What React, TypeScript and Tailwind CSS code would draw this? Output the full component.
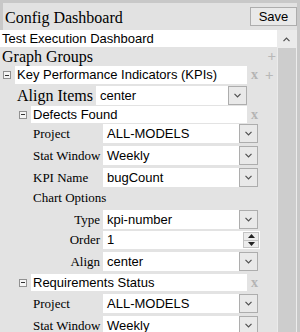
const serif = "[font-family:'Liberation_Serif','Times_New_Roman',serif]";
const sans = "[font-family:'Liberation_Sans',Arial,sans-serif]";

function Chevron({ up = false }: { up?: boolean }) {
  return (
    <svg width="7" height="5" viewBox="0 0 7 5" className={up ? 'rotate-180' : ''}>
      <path d="M0.5 0.8 L3.5 3.8 L6.5 0.8" stroke="#505050" fill="none" strokeWidth="1.2" />
    </svg>
  );
}

function Minus() {
  return (
    <span className="flex h-[8px] w-[8px] shrink-0 items-center justify-center border border-[#919191] bg-[#f4f4f4]">
      <span className="h-px w-[4px] bg-[#333]" />
    </span>
  );
}

function Select({ value, className = '' }: { value: string; className?: string }) {
  return (
    <div className={`flex h-[19px] bg-white ${className}`}>
      <span className={`flex-1 pl-[4px] text-[13px] leading-[19px] text-black ${sans}`}>{value}</span>
      <span className="flex w-[19px] items-center justify-center border border-[#adadad] bg-[#e9e9e9]">
        <Chevron />
      </span>
    </div>
  );
}

function Field({ label, value, right = false, top = 3 }: { label: string; value: string; right?: boolean; top?: number }) {
  return (
    <div className="flex h-[19px] items-center pl-[33px]" style={{ marginTop: top }}>
      <span className={`w-[70px] shrink-0 text-[13px] leading-[19px] ${serif} ${right ? 'pr-[3px] text-right' : ''}`}>
        {label}
      </span>
      <Select value={value} className="w-[155px]" />
    </div>
  );
}

function Group({ name, indent, h, plus = false }: { name: string; indent: number; h: number; plus?: boolean }) {
  return (
    <div className="flex items-center" style={{ height: h }}>
      <div className="flex items-center" style={{ paddingLeft: indent }}>
        <Minus />
      </div>
      <div
        className={`ml-[4px] bg-white pl-[2px] text-[13px] ${sans}`}
        style={{ width: 247 - indent - 12, height: h, lineHeight: `${h}px` }}
      >
        {name}
      </div>
      <span className={`w-[15px] text-center text-[14px] font-bold leading-[18px] text-[#b4b4b4] ${serif}`}>x</span>
      {plus && <span className="ml-[3px] text-[15px] leading-[18px] text-[#b8b8b8]">+</span>}
    </div>
  );
}

export default function App() {
  return (
    <div className="flex h-[332px] w-[300px] flex-col overflow-hidden border-r-[3px] border-[#c8c8c8] bg-[#e3e3e3] text-black">
      <div className="flex h-[30px] shrink-0 items-start justify-between border-t-[3px] border-l-[3px] border-[#c8c8c8] bg-[#e2e2e2]">
        <span className={`pl-[2px] pt-[5px] text-[16px] leading-[20px] ${serif}`}>Config Dashboard</span>
        <button
          className={`mt-[4px] h-[19px] w-[47px] border border-[#adadad] bg-[#e9e9e9] text-[13px] leading-[17px] ${sans}`}
        >
          Save
        </button>
      </div>

      <div className="flex min-h-0 flex-1">
        <div className="w-[277px] shrink-0">
          <div className={`h-[17px] bg-white pl-[2px] text-[13px] leading-[17px] ${sans}`}>Test Execution Dashboard</div>

          <div className="flex h-[19px] items-center justify-between pr-[1px]">
            <span className={`pl-[2px] text-[16px] leading-[19px] ${serif}`}>Graph Groups</span>
            <span className="text-[15px] leading-[19px] text-[#b8b8b8]">+</span>
          </div>

          <Group name="Key Performance Indicators (KPIs)" indent={3} h={18} plus />

          <div className="mt-[2px] flex h-[19px] items-center">
            <span className={`w-[96px] shrink-0 pl-[17px] text-[16px] leading-[19px] ${serif}`}>Align Items</span>
            <Select value="center" className="w-[151px]" />
          </div>

          <div className="mt-[1px]">
            <Group name="Defects Found" indent={19} h={17} />
          </div>

          <Field label="Project" value="ALL-MODELS" top={1} />
          <Field label="Stat Window" value="Weekly" />
          <Field label="KPI Name" value="bugCount" />

          <div className={`h-[20px] pl-[33px] pt-[1px] text-[13px] leading-[19px] ${serif}`}>Chart Options</div>

          <Field label="Type" value="kpi-number" right />

          <div className="mt-[2px] flex h-[18px] items-center pl-[33px]">
            <span className={`w-[70px] shrink-0 pr-[3px] text-right text-[13px] leading-[18px] ${serif}`}>Order</span>
            <div className="flex h-[18px] w-[157px] items-center bg-white pr-[1px]">
              <span className={`flex-1 pl-[4px] text-[13px] leading-[18px] ${sans}`}>1</span>
              <div className="flex h-[16px] w-[16px] flex-col border border-[#c4c4c4] bg-[#ececec]">
                <span className="flex flex-1 items-center justify-center border-b border-[#c4c4c4]">
                  <svg width="7" height="4" viewBox="0 0 7 4"><path d="M0 4 L3.5 0 L7 4Z" fill="#222" /></svg>
                </span>
                <span className="flex flex-1 items-center justify-center">
                  <svg width="7" height="4" viewBox="0 0 7 4"><path d="M0 0 L3.5 4 L7 0Z" fill="#222" /></svg>
                </span>
              </div>
            </div>
          </div>

          <Field label="Align" value="center" right />

          <div className="mt-[3px]">
            <Group name="Requirements Status" indent={19} h={17} />
          </div>

          <Field label="Project" value="ALL-MODELS" />
          <Field label="Stat Window" value="Weekly" />
        </div>

        <div className="flex w-[19px] shrink-0 flex-col bg-[#ebebeb]">
          <div className="flex h-[18px] items-center justify-center">
            <Chevron up />
          </div>
          <div className="ml-[1px] flex-1 bg-[#cdcdcd]" />
        </div>
        <div className="w-px bg-[#ececec]" />
      </div>
    </div>
  );
}
